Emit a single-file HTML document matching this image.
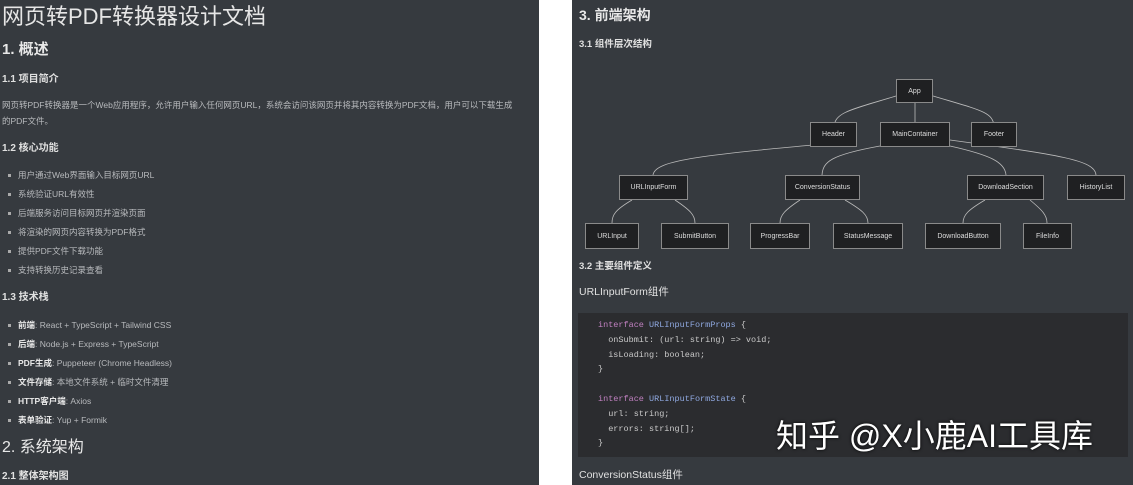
<!DOCTYPE html>
<html><head><meta charset="utf-8"><style>
*{margin:0;padding:0;box-sizing:border-box}
body{width:1133px;height:485px;background:#fff;position:relative;overflow:hidden;font-family:"Liberation Sans","Noto Sans CJK SC",sans-serif;color:#d8d9db}
.p{position:absolute;top:0;height:485px;background:#363a3f}
.t{position:absolute;white-space:pre;line-height:1}
.h1{font-size:22px;color:#e6e6e6}
.h2{font-size:15px;font-weight:bold;color:#e8e8e8}
.h3{font-size:10px;font-weight:bold;color:#e0e0e0}
.s{font-size:8.5px;color:#b8babd}
.b b{color:#e8e8e8}
.dot{position:absolute;width:3px;height:3px;background:#aaa;left:8px}
.code{position:absolute;left:578px;top:313px;width:550px;height:144px;background:#2b2c2f}
.c{font-family:"Liberation Mono",monospace;font-size:8.5px;color:#c9c9c9}
.k{color:#c080c0}.n{color:#8fa8e0}
.nd{position:absolute;background:#1f2022;border:1px solid #8a8a8a;color:#ddd;font-size:7px;display:flex;align-items:center;justify-content:center}
</style></head><body>
<div class="p" style="left:0;width:539px"></div>
<div class="p" style="left:572px;width:561px"></div>

<div class="t h1" style="left:2px;top:6px">网页转PDF转换器设计文档</div>
<div class="t h2" style="left:2px;top:42px">1. 概述</div>
<div class="t h3" style="left:2px;top:75px">1.1 项目简介</div>
<div class="t s" style="left:2px;top:101px">网页转PDF转换器是一个Web应用程序，允许用户输入任何网页URL，系统会访问该网页并将其内容转换为PDF文档，用户可以下载生成</div>
<div class="t s" style="left:2px;top:117px">的PDF文件。</div>
<div class="t h3" style="left:2px;top:144px">1.2 核心功能</div>
<div class="dot" style="top:174px"></div><div class="t s" style="left:18px;top:171px">用户通过Web界面输入目标网页URL</div>
<div class="dot" style="top:193px"></div><div class="t s" style="left:18px;top:190px">系统验证URL有效性</div>
<div class="dot" style="top:212px"></div><div class="t s" style="left:18px;top:209px">后端服务访问目标网页并渲染页面</div>
<div class="dot" style="top:231px"></div><div class="t s" style="left:18px;top:228px">将渲染的网页内容转换为PDF格式</div>
<div class="dot" style="top:250px"></div><div class="t s" style="left:18px;top:247px">提供PDF文件下载功能</div>
<div class="dot" style="top:269px"></div><div class="t s" style="left:18px;top:266px">支持转换历史记录查看</div>
<div class="t h3" style="left:2px;top:293px">1.3 技术栈</div>
<div class="dot" style="top:324px"></div><div class="t s b" style="left:18px;top:321px"><b>前端</b>: React + TypeScript + Tailwind CSS</div>
<div class="dot" style="top:343px"></div><div class="t s b" style="left:18px;top:340px"><b>后端</b>: Node.js + Express + TypeScript</div>
<div class="dot" style="top:362px"></div><div class="t s b" style="left:18px;top:359px"><b>PDF生成</b>: Puppeteer (Chrome Headless)</div>
<div class="dot" style="top:381px"></div><div class="t s b" style="left:18px;top:378px"><b>文件存储</b>: 本地文件系统 + 临时文件清理</div>
<div class="dot" style="top:400px"></div><div class="t s b" style="left:18px;top:397px"><b>HTTP客户端</b>: Axios</div>
<div class="dot" style="top:419px"></div><div class="t s b" style="left:18px;top:416px"><b>表单验证</b>: Yup + Formik</div>
<div class="t h2" style="left:2px;top:440px;font-weight:normal;font-size:16px">2. 系统架构</div>
<div class="t h3" style="left:2px;top:472px">2.1 整体架构图</div>

<div class="t h2" style="left:579px;top:8px;font-size:14px">3. 前端架构</div>
<div class="t h3" style="left:579px;top:40px;font-size:9.5px">3.1 组件层次结构</div>

<svg style="position:absolute;left:0;top:0" width="1133" height="485" fill="none" stroke="#bbb" stroke-width="0.8">
<path d="M896 96 C850 110 836 112 834 126"/><path d="M915 103 V126"/><path d="M933 96 C980 110 993 112 994 126"/>
<path d="M857 141 C700 155 655 160 653 175"/><path d="M880 146 C830 155 823 162 822 175"/>
<path d="M950 146 C990 155 1005 162 1006 175"/><path d="M950 140 C1060 155 1095 160 1096 175"/>
<path d="M632 200 C615 210 612 215 612 223"/><path d="M675 200 C690 210 695 215 695 223"/>
<path d="M800 200 C785 210 780 215 780 223"/><path d="M845 200 C862 210 868 215 868 223"/>
<path d="M985 200 C968 210 963 215 963 223"/><path d="M1030 200 C1042 210 1047 215 1047 223"/>
</svg>
<div class="nd" style="left:896px;top:79px;width:37px;height:24px">App</div>
<div class="nd" style="left:810px;top:122px;width:47px;height:25px">Header</div>
<div class="nd" style="left:880px;top:122px;width:70px;height:25px">MainContainer</div>
<div class="nd" style="left:971px;top:122px;width:46px;height:25px">Footer</div>
<div class="nd" style="left:619px;top:175px;width:69px;height:25px">URLInputForm</div>
<div class="nd" style="left:785px;top:175px;width:75px;height:25px">ConversionStatus</div>
<div class="nd" style="left:967px;top:175px;width:77px;height:25px">DownloadSection</div>
<div class="nd" style="left:1067px;top:175px;width:58px;height:25px">HistoryList</div>
<div class="nd" style="left:585px;top:223px;width:54px;height:26px">URLInput</div>
<div class="nd" style="left:661px;top:223px;width:68px;height:26px">SubmitButton</div>
<div class="nd" style="left:750px;top:223px;width:60px;height:26px">ProgressBar</div>
<div class="nd" style="left:833px;top:223px;width:70px;height:26px">StatusMessage</div>
<div class="nd" style="left:925px;top:223px;width:76px;height:26px">DownloadButton</div>
<div class="nd" style="left:1023px;top:223px;width:49px;height:26px">FileInfo</div>

<div class="t h3" style="left:579px;top:262px;font-size:9.5px">3.2 主要组件定义</div>
<div class="t" style="left:579px;top:287px;font-size:10.5px;color:#e0e0e0">URLInputForm组件</div>
<div class="code"></div>
<div class="t c" style="left:598px;top:321px"><span class="k">interface</span> <span class="n">URLInputFormProps</span> {</div>
<div class="t c" style="left:598px;top:336px">  onSubmit: (url: string) =&gt; void;</div>
<div class="t c" style="left:598px;top:351px">  isLoading: boolean;</div>
<div class="t c" style="left:598px;top:365px">}</div>
<div class="t c" style="left:598px;top:395px"><span class="k">interface</span> <span class="n">URLInputFormState</span> {</div>
<div class="t c" style="left:598px;top:410px">  url: string;</div>
<div class="t c" style="left:598px;top:425px">  errors: string[];</div>
<div class="t c" style="left:598px;top:439px">}</div>
<div class="t" style="left:776px;top:420px;font-size:32px;color:#fff;text-shadow:0 0 3px #000">知乎 @X小鹿AI工具库</div>
<div class="t" style="left:579px;top:470px;font-size:10.5px;color:#e0e0e0">ConversionStatus组件</div>
</body></html>
